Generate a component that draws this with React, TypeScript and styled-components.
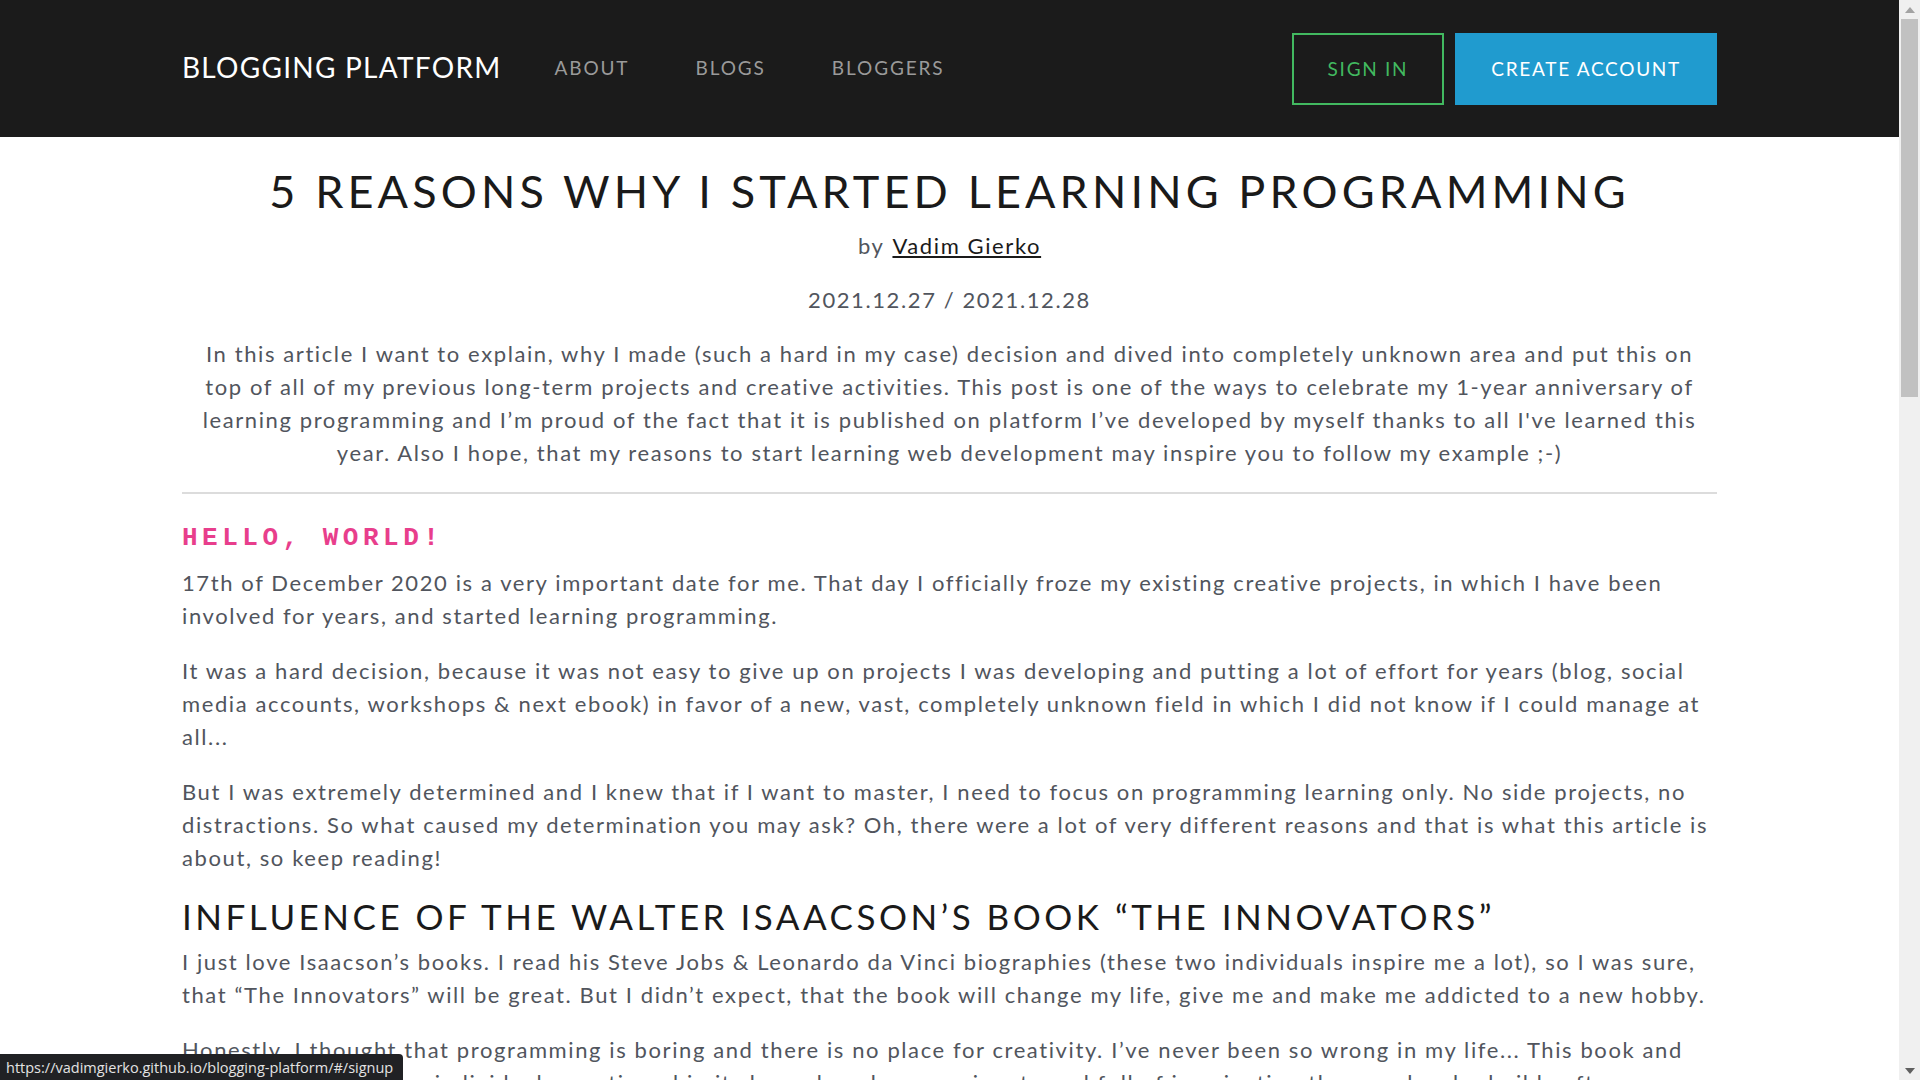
import styled, { createGlobalStyle } from "styled-components";

const GlobalStyle = createGlobalStyle`
  body {
    margin: 0;
    padding-right: 21px;
    background: #ffffff;
    font-family: "Lato", "Noto Sans", sans-serif;
    color: #51555d;
  }
  * {
    box-sizing: border-box;
  }
`;

const NavBar = styled.header`
  background: #1b1b1b;
`;

const NavInner = styled.div`
  width: 1535px;
  margin: 0 auto;
  height: 137px;
  display: flex;
  align-items: center;
`;

const Brand = styled.a`
  color: #ffffff;
  font-size: 28px;
  letter-spacing: 0.045em;
  text-decoration: none;
  margin-right: 20px;
  margin-top: -3px;
`;

const NavLinks = styled.nav`
  display: flex;
  flex: 1;
`;

const NavLink = styled.a`
  color: #9a9a9a;
  font-size: 19px;
  letter-spacing: 0.1em;
  padding: 0 33px;
  text-decoration: none;
  margin-top: -3px;
`;

const Actions = styled.div`
  display: flex;
  gap: 11px;
`;

interface ActionButtonProps {
  $variant: "outline" | "solid";
}

const ActionButton = styled.button<ActionButtonProps>`
  height: 72px;
  padding: 0 34px;
  font-family: inherit;
  font-size: 19px;
  letter-spacing: 0.09em;
  border: 2px solid
    ${({ $variant }) => ($variant === "outline" ? "#42b960" : "#209bcf")};
  background: ${({ $variant }) =>
    $variant === "outline" ? "transparent" : "#209bcf"};
  color: ${({ $variant }) => ($variant === "outline" ? "#42b960" : "#ffffff")};
  cursor: pointer;
`;

const Article = styled.main`
  width: 1535px;
  margin: 0 auto;
  padding-top: 27px;
`;

const Title = styled.h1`
  margin: 0 0 11px;
  text-align: center;
  font-size: 45px;
  font-weight: 400;
  line-height: 54px;
  letter-spacing: 0.092em;
  color: #1a1a1a;
`;

const Meta = styled.p`
  margin: 0 0 21px;
  text-align: center;
  font-size: 22px;
  line-height: 33px;
  letter-spacing: 1.6px;
`;

const AuthorLink = styled.a`
  color: #1a1a1a;
  text-decoration: underline;
  margin-left: 8px;
`;

const Paragraph = styled.p<{ $lead?: boolean }>`
  margin: 0 0 ${({ $lead }) => ($lead ? "23px" : "22px")};
  padding: 0 ${({ $lead }) => ($lead ? "10px" : "0")};
  font-size: 22px;
  line-height: 33px;
  letter-spacing: 1.6px;
  text-align: ${({ $lead }) => ($lead ? "center" : "left")};
`;

const Divider = styled.hr`
  margin: 0 0 26px;
  border: 0;
  border-top: 2px solid #dcdcdc;
`;

const CodeHeading = styled.h3`
  margin: 0 0 12px;
  font-size: 26px;
  line-height: 31px;
  font-weight: 700;
`;

const Code = styled.code`
  font-family: "Liberation Mono", "DejaVu Sans Mono", monospace;
  color: #e83e8c;
  letter-spacing: 4.5px;
`;

const SectionTitle = styled.h2`
  margin: 0 0 9px;
  font-size: 35px;
  line-height: 40px;
  font-weight: 400;
  letter-spacing: 0.1em;
  color: #1a1a1a;
`;

const StatusBar = styled.div`
  position: fixed;
  left: 0;
  bottom: 0;
  height: 26px;
  padding: 0 10px 0 6px;
  display: flex;
  align-items: center;
  background: #202124;
  border-top-right-radius: 4px;
  color: #e3e3e3;
  font-family: "Open Sans", "Liberation Sans", sans-serif;
  font-size: 14.5px;
`;

const ScrollTrack = styled.div`
  position: fixed;
  top: 0;
  right: 0;
  width: 21px;
  height: 100vh;
  background: #f0f0f0;
  display: flex;
  flex-direction: column;
  align-items: center;
`;

const ScrollArrow = styled.div<{ $down?: boolean }>`
  height: 19px;
  display: flex;
  align-items: center;
  justify-content: center;
  margin-top: ${({ $down }) => ($down ? "auto" : "0")};
`;

const ScrollThumb = styled.div`
  width: 17px;
  height: 378px;
  background: #c1c1c1;
`;

const Triangle = ({ down }: { down?: boolean }) => (
  <svg width="10" height="6" viewBox="0 0 10 6">
    <polygon
      points={down ? "0,0 10,0 5,6" : "5,0 10,6 0,6"}
      fill={down ? "#606060" : "#a3a3a3"}
    />
  </svg>
);

export default function App() {
  return (
    <>
      <GlobalStyle />
      <NavBar>
        <NavInner>
          <Brand href="#">BLOGGING PLATFORM</Brand>
          <NavLinks>
            <NavLink href="#">ABOUT</NavLink>
            <NavLink href="#">BLOGS</NavLink>
            <NavLink href="#">BLOGGERS</NavLink>
          </NavLinks>
          <Actions>
            <ActionButton $variant="outline">SIGN IN</ActionButton>
            <ActionButton $variant="solid">CREATE ACCOUNT</ActionButton>
          </Actions>
        </NavInner>
      </NavBar>

      <Article>
        <Title>5 REASONS WHY I STARTED LEARNING PROGRAMMING</Title>
        <Meta>
          by<AuthorLink href="#">Vadim Gierko</AuthorLink>
        </Meta>
        <Meta>2021.12.27 / 2021.12.28</Meta>
        <Paragraph $lead>
          In this article I want to explain, why I made (such a hard in my case)
          decision and dived into completely unknown area and put this on top of
          all of my previous long-term projects and creative activities. This
          post is one of the ways to celebrate my 1-year anniversary of learning
          programming and I’m proud of the fact that it is published on platform
          I’ve developed by myself thanks to all I've learned this year. Also I
          hope, that my reasons to start learning web development may inspire
          you to follow my example ;-)
        </Paragraph>
        <Divider />

        <CodeHeading>
          <Code>HELLO, WORLD!</Code>
        </CodeHeading>
        <Paragraph>
          17th of December 2020 is a very important date for me. That day I
          officially froze my existing creative projects, in which I have been
          involved for years, and started learning programming.
        </Paragraph>
        <Paragraph>
          It was a hard decision, because it was not easy to give up on projects
          I was developing and putting a lot of effort for years (blog, social
          media accounts, workshops &amp; next ebook) in favor of a new, vast,
          completely unknown field in which I did not know if I could manage at
          all...
        </Paragraph>
        <Paragraph>
          But I was extremely determined and I knew that if I want to master, I
          need to focus on programming learning only. No side projects, no
          distractions. So what caused my determination you may ask? Oh, there
          were a lot of very different reasons and that is what this article is
          about, so keep reading!
        </Paragraph>

        <SectionTitle>INFLUENCE OF THE WALTER ISAACSON’S BOOK “THE INNOVATORS”</SectionTitle>
        <Paragraph>
          I just love Isaacson’s books. I read his Steve Jobs &amp; Leonardo da
          Vinci biographies (these two individuals inspire me a lot), so I was
          sure, that “The Innovators” will be great. But I didn’t expect, that
          the book will change my life, give me and make me addicted to a new
          hobby.
        </Paragraph>
        <Paragraph>
          Honestly, I thought that programming is boring and there is no place
          for creativity. I’ve never been so wrong in my life... This book and
          stories of the creative individuals mentioned in it showed me how
          passionate and full of imagination the people who build software are.
        </Paragraph>
        <Paragraph>
          After reading it I felt that I want to be a part of this world, that I
          want to create things with code, and that it is never too late to
          start learning something completely new.
        </Paragraph>
      </Article>

      <ScrollTrack>
        <ScrollArrow>
          <Triangle />
        </ScrollArrow>
        <ScrollThumb />
        <ScrollArrow $down>
          <Triangle down />
        </ScrollArrow>
      </ScrollTrack>

      <StatusBar>https://vadimgierko.github.io/blogging-platform/#/signup</StatusBar>
    </>
  );
}
